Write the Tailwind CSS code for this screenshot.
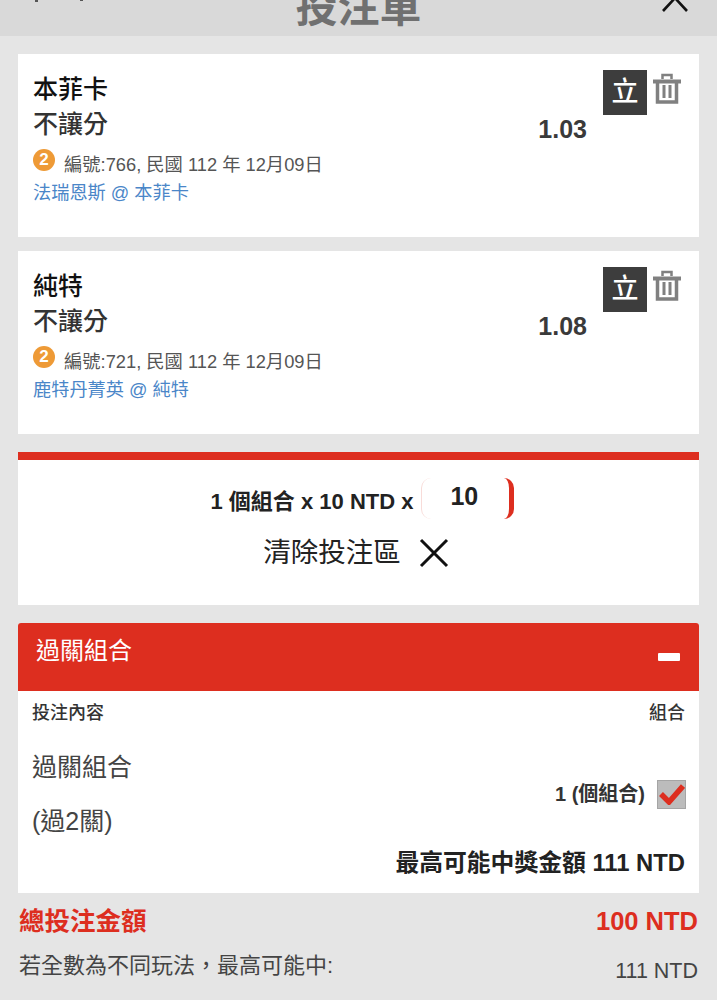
<!DOCTYPE html>
<html lang="zh-Hant">
<head>
<meta charset="utf-8">
<script src="https://cdn.jsdelivr.net/npm/@tailwindcss/browser@4"></script>
</head>
<body class="m-0 bg-[#e5e5e5]">
<div class="w-[717px] h-[1000px] overflow-hidden bg-[#e5e5e5] font-['Liberation_Sans','Noto_Sans_CJK_TC',sans-serif] text-[#222]">

  <header class="relative h-[36px] overflow-hidden bg-[#d9d9d9] flex justify-center">
    <span class="absolute left-[35px] top-0 w-[3px] h-[2px] bg-[#555]"></span>
    <span class="absolute left-[80px] top-0 w-[3px] h-[1px] bg-[#555]"></span>
    <div class="-mt-[16px] text-[42px] leading-[48px] font-bold text-[#707070] h-[48px]">投注單</div>
    <svg class="absolute right-[28px] top-0 w-[28px] h-[12px]" viewBox="0 0 28 12" fill="none" stroke="#111" stroke-width="2.6"><path d="M2 11 L14 -2 L26 11"/></svg>
  </header>

  <main class="px-[18px] pt-[18px] flex flex-col">
    <section class="h-[183px] bg-white flex pl-[15px] pr-[17px] pt-[17px]">
      <div class="flex-1 flex flex-col">
        <div class="text-[25px] leading-[36px] font-medium text-[#111]">本菲卡</div>
        <div class="text-[25px] leading-[34px] font-medium text-[#333]">不讓分</div>
        <div class="mt-[10px] flex items-center h-[28px]">
          <span class="w-[22px] h-[22px] rounded-full bg-[#ee9a36] text-white text-[17px] leading-[22px] font-bold text-center -mt-[11px]">2</span>
          <span class="ml-[9px] text-[18.3px] leading-[24px] text-[#555]">編號:766, 民國 112 年 12月09日</span>
        </div>
        <div class="mt-[1px] text-[18.2px] leading-[26px] text-[#4a86c8]">法瑞恩斯 @ 本菲卡</div>
      </div>
      <div class="mt-[43px] mr-[16px] text-[25px] leading-[30px] font-bold text-[#3a3a3a]">1.03</div>
      <div class="-mt-[1px] w-[44px] h-[45px] bg-[#3d3d3d] text-white text-[27px] leading-[45px] text-center font-medium">立</div>
      <svg class="ml-[5px] mt-[2px] w-[30px] h-[31px]" viewBox="0 0 30 31" fill="none" stroke="#808080">
        <path d="M1 8.500 H29" stroke-width="4"/><path d="M10.500 6 V2 H19.500 V6" stroke-width="2.500"/>
        <path d="M5.500 10 V29 H24.500 V10" stroke-width="3.500"/><path d="M12 12 V25 M18 12 V25" stroke-width="3"/>
      </svg>
    </section>

    <section class="mt-[14px] h-[183px] bg-white flex pl-[15px] pr-[17px] pt-[17px]">
      <div class="flex-1 flex flex-col">
        <div class="text-[25px] leading-[36px] font-medium text-[#111]">純特</div>
        <div class="text-[25px] leading-[34px] font-medium text-[#333]">不讓分</div>
        <div class="mt-[10px] flex items-center h-[28px]">
          <span class="w-[22px] h-[22px] rounded-full bg-[#ee9a36] text-white text-[17px] leading-[22px] font-bold text-center -mt-[11px]">2</span>
          <span class="ml-[9px] text-[18.3px] leading-[24px] text-[#555]">編號:721, 民國 112 年 12月09日</span>
        </div>
        <div class="mt-[1px] text-[18.2px] leading-[26px] text-[#4a86c8]">鹿特丹菁英 @ 純特</div>
      </div>
      <div class="mt-[43px] mr-[16px] text-[25px] leading-[30px] font-bold text-[#3a3a3a]">1.08</div>
      <div class="-mt-[1px] w-[44px] h-[45px] bg-[#3d3d3d] text-white text-[27px] leading-[45px] text-center font-medium">立</div>
      <svg class="ml-[5px] mt-[2px] w-[30px] h-[31px]" viewBox="0 0 30 31" fill="none" stroke="#808080">
        <path d="M1 8.500 H29" stroke-width="4"/><path d="M10.500 6 V2 H19.500 V6" stroke-width="2.500"/>
        <path d="M5.500 10 V29 H24.500 V10" stroke-width="3.500"/><path d="M12 12 V25 M18 12 V25" stroke-width="3"/>
      </svg>
    </section>

    <section class="mt-[18px] h-[153px] bg-white border-t-[8px] border-[#dd2e1f] flex flex-col items-center">
      <div class="mt-[18px] h-[41px] flex pl-[8px]">
        <span class="mt-[10px] text-[22px] leading-[28px] font-bold text-[#222]">1 個組合 x 10 NTD x</span>
        <span class="ml-[8px] w-[93px] h-[41px] rounded-[10px] border-l border-l-[#f8dcd9] border-r-[5px] border-r-[#dd2e1f] pl-[28px] text-[25px] leading-[36px] font-bold text-[#222]">10</span>
      </div>
      <div class="mt-[16px] pr-[5px] flex items-center">
        <span class="text-[27.5px] leading-[36px] text-[#222]">清除投注區</span>
        <svg class="ml-[18px] w-[30px] h-[30px]" viewBox="0 0 30 30" fill="none" stroke="#111" stroke-width="3"><path d="M2 2 L28 28 M28 2 L2 28"/></svg>
      </div>
    </section>

    <section class="mt-[18px] h-[270px] bg-white rounded-t-[3px] flex flex-col">
      <div class="h-[68px] bg-[#dd2e1f] rounded-t-[3px] flex justify-between pl-[18px] pr-[19px] text-white">
        <span class="mt-[10px] text-[24px] leading-[36px]">過關組合</span>
        <span class="mt-[30px] w-[22px] h-[8px] bg-white rounded-[1px]"></span>
      </div>
      <div class="flex justify-between px-[14px] pt-[9px] text-[18px] leading-[26px] font-medium text-[#333]">
        <span>投注內容</span><span>組合</span>
      </div>
      <div class="flex justify-between items-center pl-[14px] pr-[13px] mt-[22px]">
        <div class="flex flex-col text-[25px] text-[#444]">
          <span class="leading-[38px]">過關組合</span>
          <span class="mt-[16px] leading-[38px]">(過2關)</span>
        </div>
        <div class="flex items-center">
          <span class="text-[20px] leading-[26px] font-semibold text-[#333]">1 (個組合)</span>
          <span class="ml-[12px] w-[29px] h-[29px] bg-[#bcbcbc] border border-[#a5a5a5] flex items-center justify-center">
            <svg class="w-[26px] h-[22px]" viewBox="0 0 26 22" fill="none" stroke="#dd2e1f" stroke-width="5.500"><path d="M2 11 L10 19 L24 3"/></svg>
          </span>
        </div>
      </div>
      <div class="mt-[6px] px-[14px] text-right text-[23.8px] leading-[34px] font-bold text-[#222]">最高可能中獎金額 111 NTD</div>
    </section>

    <div class="mx-[1px] flex justify-between mt-[10px] text-[25.500px] leading-[36px] font-bold text-[#dd2e1f]">
      <span>總投注金額</span><span>100 NTD</span>
    </div>
    <div class="mx-[1px] flex justify-between mt-[13px] text-[#444]">
      <span class="text-[22px] leading-[28px]">若全數為不同玩法，最高可能中:</span>
      <span class="text-[21.500px] mt-[5px] leading-[28px]">111 NTD</span>
    </div>
  </main>
</div>
</body>
</html>
